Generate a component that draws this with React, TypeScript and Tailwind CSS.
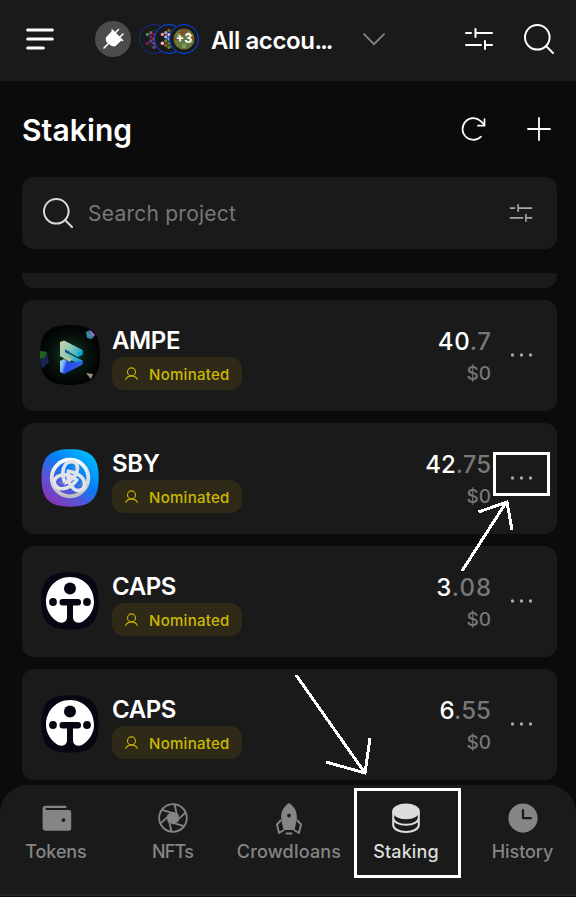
import React from "react";
import { PiClockFill } from "react-icons/pi";

function SearchIcon({ className }: { className: string }) {
  return (
    <svg viewBox="0 0 30 30" className={className} fill="none" stroke="currentColor" strokeWidth="2" strokeLinecap="round">
      <circle cx="13.3" cy="13.3" r="12.3" />
      <path d="M22 22l7 7" />
    </svg>
  );
}

function SlidersIcon({ className }: { className: string }) {
  return (
    <svg viewBox="0 0 28 22" className={className} fill="none" stroke="currentColor" strokeWidth="2" strokeLinecap="round">
      <path d="M1 5h5M10.5 1v8M10.5 5H27M1 17h15M20 13v8M20 17h7" />
    </svg>
  );
}

function DotRing({ x, colors, dim }: { x: number; colors: string[]; dim?: boolean }) {
  const dots = [
    [0, -8.5], [-3.2, -6.3], [3.2, -6.3], [-6.6, -4.6], [0, -4.3], [6.6, -4.6],
    [-3.2, -2.1], [3.2, -2.1], [0, 0], [-3.2, 2], [3.2, 2],
    [-6.6, 4.2], [0, 4.2], [6.6, 4.2], [-3.2, 6.2], [3.2, 6.2], [0, 8.2],
  ];
  return (
    <g transform={`translate(${x} 15)`}>
      <circle r="14.5" fill="#1a1a1a" stroke={dim ? "#102f88" : "#004bff"} />
      {dots.map(([a, b], i) => (
        <circle key={i} cx={a} cy={b} r="1.7" fill={colors[i % colors.length]} />
      ))}
    </g>
  );
}

function AccountStack() {
  return (
    <svg viewBox="0 0 60 30" className="h-[30px] w-[60px] shrink-0">
      <DotRing x={15} dim colors={["#173519", "#8b574e", "#6a458b", "#438d70", "#8c1264", "#6a458b", "#8c1264"]} />
      <DotRing x={30} colors={["#896414", "#8ca6ff", "#54901d", "#f39493", "#ffb2c7", "#96672b", "#9cb4ff"]} />
      <circle cx="45" cy="15" r="14.5" fill="#1a1a1a" stroke="#004bff" />
      <circle cx="45" cy="15" r="10.5" fill="#66783e" />
      <path d="M38 8h4V5h6v3h5v3H37zM43 9h3v3h-3zM35 13h4v3h-4zM51 13h4v3h-4z" fill="#805125" />
      <path d="M38 9h3v4h-3zM48 8h3v4h-3zM43 20h4v4h-4z" fill="#819c54" />
      <text x="45" y="19.3" textAnchor="middle" fill="white" fontFamily="Inter, sans-serif" fontSize="12.5" fontWeight="700">+3</text>
    </svg>
  );
}

function Header() {
  return (
    <header className="flex h-[81px] items-center bg-[#1a1a1a] pl-[26px] pr-[22px] pb-[3px]">
      <svg viewBox="0 0 28 24" className="h-6 w-7 shrink-0" stroke="white" strokeWidth="3" strokeLinecap="round">
        <path d="M1.7 3h24.6M1.7 12h24.6M1.7 21h15.6" />
      </svg>
      <div className="ml-[41px] size-9 shrink-0 rounded-full bg-[#4c4c4c]">
        <svg viewBox="0 0 36 36" className="size-9">
          <path d="M10.800 16.800L17.500 9.300L27 19L20 25.500L16.500 25L11 20.500Z" fill="white" />
          <path d="M9 27l5-5M19.500 12.500l4-4M24 17l4-4M17 9l10.500 10.500" stroke="white" strokeWidth="1.600" strokeLinecap="round" />
        </svg>
      </div>
      <div className="ml-2 flex"><AccountStack /></div>
      <span className="ml-3 w-[130px] whitespace-nowrap pt-[3px] text-2xl font-semibold tracking-[-0.4px]">All accou<span className="tracking-[-2px]">...</span></span>
      <svg viewBox="0 0 22 13" className="ml-[22px] h-[13px] w-[22px] shrink-0" fill="none" stroke="#858585" strokeWidth="1.700" strokeLinecap="round">
        <path d="M1 1.200L11 11.200L21 1.200" />
      </svg>
      <SlidersIcon className="ml-auto h-[22px] w-7 shrink-0" />
      <SearchIcon className="ml-[31px] size-[30px] shrink-0" />
    </header>
  );
}

function TitleBar() {
  return (
    <div className="flex h-24 items-center px-[22px] pr-[19px]">
      <h1 className="pt-[2px] text-[30px] font-semibold tracking-[0.1px]">Staking</h1>
      <svg viewBox="0 0 25 24" className="ml-auto h-6 w-[25px]" fill="none" stroke="white" strokeWidth="1.700" strokeLinecap="round">
        <path d="M20 19.600A10.800 10.800 0 1 1 19.700 4.100L23 7.400M23.500 2v6.700H17" />
      </svg>
      <svg viewBox="0 0 24 24" className="ml-[41px] mr-[6px] size-6" stroke="white" strokeWidth="1.800" strokeLinecap="round">
        <path d="M12 1v22M1 12h22" />
      </svg>
    </div>
  );
}

function SearchBar() {
  return (
    <div className="mx-[22px] mr-[19px] flex h-[72px] items-center rounded-xl bg-[#1a1a1a] pl-[21px] pr-6">
      <SearchIcon className="size-[30px] text-[#d9d9d9]" />
      <span className="ml-[15px] pt-[2px] text-[21px] tracking-[0.24px] text-[#777]">Search project</span>
      <SlidersIcon className="ml-auto h-[18px] w-6 text-[#a6a6a6]" />
    </div>
  );
}

function AmpeLogo() {
  return (
    <svg viewBox="0 0 60 60" className="size-[60px]">
      <defs>
        <radialGradient id="ampeGlow"><stop stopColor="#124d39" /><stop offset=".55" stopColor="#07150f" /><stop offset="1" stopColor="#020304" /></radialGradient>
        <linearGradient id="ampeTop" x1="0" y1="0" x2="1" y2=".6"><stop stopColor="#d3ceb0" /><stop offset=".45" stopColor="#8fccb2" /><stop offset="1" stopColor="#12a5d8" /></linearGradient>
        <linearGradient id="ampeBottom" x1="0" y1="0" x2="1" y2=".2"><stop stopColor="#9ae5e5" /><stop offset=".22" stopColor="#79afed" /><stop offset=".35" stopColor="#2549ed" /><stop offset="1" stopColor="#3264df" /></linearGradient>
        <clipPath id="ampeShape"><path d="M30 0C52 0 60 8 60 30S52 60 30 60 0 52 0 30 8 0 30 0Z" /></clipPath>
      </defs>
      <g clipPath="url(#ampeShape)">
        <path d="M0 0h60v60H0z" fill="url(#ampeGlow)" />
        <path d="M0 26l7 1 2 10-6 6-3-2z" fill="#172654" /><path d="M0 26l7 1-2 5-5 2z" fill="#246217" />
        <path d="M20 17L24 15.500L42.500 25V29.500L38 32L25 25V27L42.500 35.500V39L38 38L20 31Z" fill="url(#ampeTop)" />
        <path d="M20 36L24 34L31 37.500L42.500 36V39.500L24 49L20 47Z" fill="url(#ampeBottom)" />
        <path d="M24.500 24l6 3-4 1.500z" fill="#2050b9" />
        <path d="M38 27.500l4.500-2v4l-4.500 2.500z" fill="#00acd8" />
        <path d="M20 31l4-1 8 4-2 3z" fill="#acc8a5" />
        <path d="M46 7l4-2 5 5-3 4-5-1z" fill="#41779c" /><path d="M50 5l5 5-3 1z" fill="#c464cf" /><path d="M46 7l5 3-1 4z" fill="#22a5a0" />
        <path d="M46 48l7 1-2 5z" fill="#9f927a" /><path d="M46 48l3 4 2 2z" fill="#b45676" />
      </g>
    </svg>
  );
}

function SbyLogo() {
  return (
    <svg viewBox="0 0 60 60" className="size-[60px]">
      <defs>
        <linearGradient id="sbyBack" x1=".1" y1="1" x2=".9" y2="0"><stop stopColor="#922cad" /><stop offset=".3" stopColor="#5e50d3" /><stop offset=".58" stopColor="#077cf5" /><stop offset="1" stopColor="#00c9ff" /></linearGradient>
        <linearGradient id="sbyKnot" x1="0" y1="0" x2="0" y2="1"><stop stopColor="#fff" /><stop offset="1" stopColor="#bcbdc0" /></linearGradient>
      </defs>
      <path d="M30 1.300C50.500 1.300 58.700 9 58.700 30S50.500 58.700 30 58.700 1.500 51 1.500 30 9.500 1.300 30 1.300Z" fill="url(#sbyBack)" />
      <g fill="none" stroke="#e1e3e8" strokeLinecap="round">
        <circle cx="30" cy="30" r="18.300" strokeWidth="3.800" stroke="url(#sbyKnot)" />
        <g strokeWidth="3.600">
          <path d="M25 35C21 26 23 17 28 14.500C33 12 38 15 37.500 21C37 26 33 31 27 34" />
          <path d="M25 35C21 26 23 17 28 14.500C33 12 38 15 37.500 21C37 26 33 31 27 34" transform="rotate(120 30 30)" />
          <path d="M25 35C21 26 23 17 28 14.500C33 12 38 15 37.500 21C37 26 33 31 27 34" transform="rotate(240 30 30)" />
        </g>
      </g>
      <path d="M33 17.500q2 1.500 1 5M42 34q-1 4-4 4M19 34q3 2 6 1" stroke="#8e95a6" fill="none" />
    </svg>
  );
}

function CapsLogo() {
  return (
    <svg viewBox="0 0 60 60" className="size-[60px]">
      <path d="M30 1.300C51 1.300 58.700 9 58.700 30S51 58.700 30 58.700 1.300 51 1.300 30 9 1.300 30 1.300Z" fill="#070714" />
      <path d="M30 6C44 6 54 17 54 31C54 39 49 47 42 51C36 53 33 50 33 46V34H27V46C27 50 24 53 18 51C11 47 6 39 6 31C6 17 16 6 30 6Z" fill="white" />
      <g fill="#070714"><circle cx="30" cy="17.500" r="6" /><circle cx="13" cy="31" r="3.900" /><circle cx="47" cy="31" r="3.900" /><rect x="19.500" y="28" width="21.500" height="6.500" rx="3" /></g>
    </svg>
  );
}

type Stake = { name: string; whole: string; decimal: string; logo: React.ReactNode; spacing: string };
const stakes: Stake[] = [
  { name: "AMPE", whole: "40", decimal: ".7", logo: <AmpeLogo />, spacing: "tracking-[0.7px] -mr-[0.7px]" },
  { name: "SBY", whole: "42", decimal: ".75", logo: <SbyLogo />, spacing: "tracking-[0px]" },
  { name: "CAPS", whole: "3", decimal: ".08", logo: <CapsLogo />, spacing: "tracking-[1px] -mr-[1px]" },
  { name: "CAPS", whole: "6", decimal: ".55", logo: <CapsLogo />, spacing: "tracking-[0.1px]" },
];

function StakeCard({ stake }: { stake: Stake }) {
  return (
    <article className="flex h-[111px] shrink-0 rounded-xl bg-[#1a1a1a] pl-[18px] pr-6">
      <div className="flex items-center pb-[1px]">{stake.logo}</div>
      <div className="ml-3 flex flex-col items-start pt-6">
        <span className="h-[33px] text-2xl font-semibold leading-[34px] tracking-[-0.4px]">{stake.name}</span>
        <span className="flex h-[33px] w-[130px] items-center rounded-[12px] bg-[#2e2a17] pl-[13px] text-[#ccb800]">
          <svg viewBox="0 0 13 13" className="mb-px size-[13px]" fill="none" stroke="currentColor" strokeWidth="1.100" strokeLinecap="round">
            <circle cx="6.500" cy="4.900" r="4" /><path d="M.7 12.300C2 9.900 4 8.900 6.500 8.900s4.500 1 5.800 3.400" />
          </svg>
          <span className="ml-[11px] pt-[2px] text-[15px] font-medium leading-[30px] tracking-[0.28px]">Nominated</span>
        </span>
      </div>
      <div className="ml-auto flex flex-col items-end pt-[25px]">
        <span className={`text-2xl font-medium leading-[34px] ${stake.spacing}`}>{stake.whole}<span className="font-medium text-[#777]">{stake.decimal}</span></span>
        <span className="text-[19px] font-medium leading-[30px] text-[#777]">$0</span>
      </div>
      <div className="ml-[19px] flex items-center pb-[2px]">
        <svg viewBox="0 0 23 4" className="h-1 w-[23px]" fill="#a6a6a6"><circle cx="2.500" cy="2" r="1.700" /><circle cx="11.500" cy="2" r="1.700" /><circle cx="20.500" cy="2" r="1.700" /></svg>
      </div>
    </article>
  );
}

function WalletIcon() {
  return <svg viewBox="0 0 30 30" className="ml-[2px] size-[30px]"><path fill="currentColor" fillRule="evenodd" d="M3.500 2.800H23.500a1.100 1.100 0 0 1 0 2.200H4.500a1 1 0 0 0 0 2H27a2.200 2.200 0 0 1 2.200 2.200V25.500a2.200 2.200 0 0 1-2.200 2.200H3.500A3 3 0 0 1 .6 24.700V5.800a3 3 0 0 1 2.900-3ZM21.500 15.200a1.900 1.900 0 1 0 0 3.800A1.900 1.900 0 0 0 21.500 15.200Z" /></svg>;
}

function ApertureIcon() {
  return (
    <svg viewBox="0 0 30 30" className="size-[30px]" fill="none" stroke="currentColor" strokeWidth="1.800">
      <circle cx="15" cy="15" r="13.800" />
      <path d="M15 9.500L19.800 12.200V17.800L15 20.500L10.200 17.800V12.200Z" fill="currentColor" />
      {[0, 60, 120, 180, 240, 300].map((angle) => <path key={angle} d="M20 16.500L16.500 1.500" transform={`rotate(${angle} 15 15)`} />)}
    </svg>
  );
}

function RocketIcon() {
  return <svg viewBox="0 0 30 32" className="mt-[2px] h-8 w-[30px]"><path d="M15 0C9 4 6 10 7.500 18L9.500 27h11l2-9C24 10 21 4 15 0Z" fill="currentColor" /><circle cx="15" cy="12.600" r="1.900" fill="#1a1a1a" /><path d="M7 17l-4 4.500 2 8.500 5-3M23 17l4 4.500-2 8.500-5-3" fill="none" stroke="currentColor" strokeWidth="1.900" strokeLinejoin="round" /><path d="M12.500 30.500h5" stroke="currentColor" strokeWidth="2" strokeLinecap="round" /></svg>;
}

function CoinsIcon() {
  return <svg viewBox="0 0 30 30" className="size-[30px]"><ellipse cx="15" cy="8.300" rx="13.800" ry="7.900" fill="currentColor" /><path d="M2.200 8v14c0 4 5.800 7 12.800 7s12.800-3 12.800-7V8M2.200 14.800c0 4 5.800 7 12.800 7s12.800-3 12.800-7" fill="none" stroke="currentColor" strokeWidth="2" /></svg>;
}

function Navigation() {
  const items = [
    { label: "Tokens", icon: <WalletIcon />, spacing: "tracking-[-0.1px]" },
    { label: "NFTs", icon: <ApertureIcon />, spacing: "tracking-[-0.8px]" },
    { label: "Crowdloans", icon: <RocketIcon />, spacing: "tracking-[0.2px]" },
    { label: "Staking", icon: <CoinsIcon />, spacing: "tracking-[0.15px]" },
    { label: "History", icon: <PiClockFill className="size-9" />, spacing: "tracking-[-0.1px]" },
  ];
  return (
    <nav className="grid h-[111px] grid-cols-[112px_121px_112px_122px_111px] rounded-t-[28px] border-b-2 border-[#242527] bg-[#1a1a1a]">
      {items.map(({ label, icon, spacing }) => (
        <div key={label} className={`flex flex-col items-center pt-[18px] ${label === "Staking" ? "text-[#ddd]" : "text-[#858585]"}`}>
          <span className="flex size-[30px] items-center justify-center [&>svg]:shrink-0">{icon}</span>
          <span className={`mt-1 text-[18px] font-medium leading-[30px] ${spacing}`}>{label}</span>
        </div>
      ))}
    </nav>
  );
}

export default function App() {
  return (
    <main className="relative flex h-[897px] w-[576px] flex-col overflow-hidden bg-[#0b0b0b] font-['Inter',sans-serif] text-white">
      <Header />
      <TitleBar />
      <SearchBar />
      <section className="mx-[22px] mr-[19px] mt-6 flex h-[512px] flex-col gap-3">
        <div className="h-[15px] shrink-0 rounded-b-xl bg-[#1a1a1a]" />
        {stakes.map((stake, index) => <StakeCard key={index} stake={stake} />)}
      </section>
      <Navigation />
      <div className="absolute left-[493px] top-[452px] h-11 w-[57px] border-[3px] border-white" />
      <div className="absolute left-[354px] top-[788px] h-[90px] w-[107px] border-[3px] border-white" />
      <svg viewBox="0 0 576 897" className="pointer-events-none absolute inset-0 h-[897px] w-[576px]" fill="none" stroke="white" strokeWidth="3" shapeRendering="crispEdges">
        <path d="M462 571L507 501M478.500 512L507 502L512 530M296 675L365 773M326 762L365 773L370 738" />
      </svg>
    </main>
  );
}
